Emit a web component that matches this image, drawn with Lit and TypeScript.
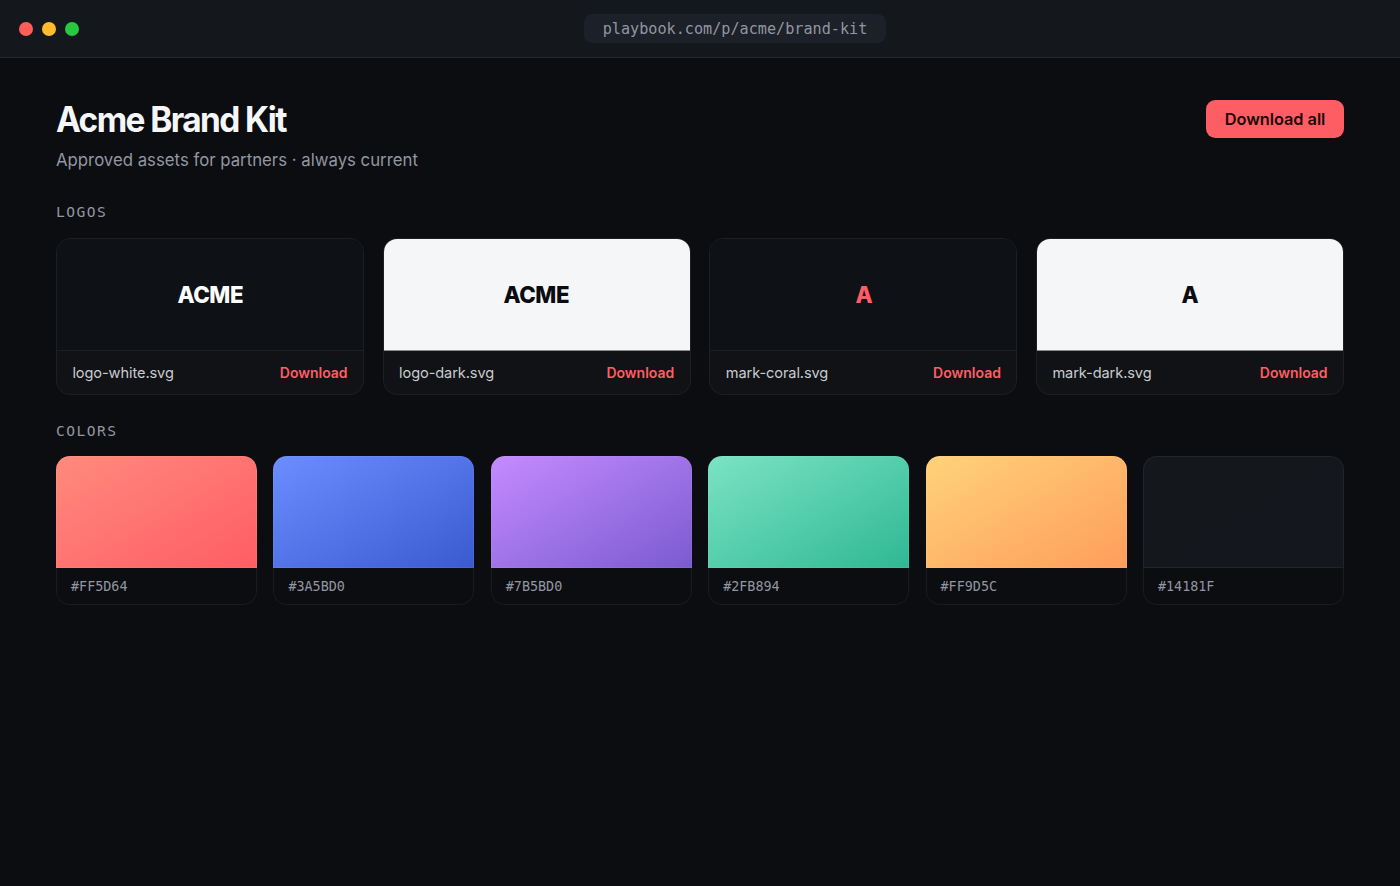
import { LitElement, html, css } from "lit";
import { customElement, property } from "lit/decorators.js";

const LOGOS = [
  { mark: "ACME", file: "logo-white.svg", tone: "white" },
  { mark: "ACME", file: "logo-dark.svg", tone: "dark" },
  { mark: "A", file: "mark-coral.svg", tone: "coral" },
  { mark: "A", file: "mark-dark.svg", tone: "dark" },
];

const COLORS = [
  { from: "#ff8a7d", hex: "#FF5D64" },
  { from: "#6b8dff", hex: "#3A5BD0" },
  { from: "#c48bff", hex: "#7B5BD0" },
  { from: "#7be3c3", hex: "#2FB894" },
  { from: "#ffd27a", hex: "#FF9D5C" },
  { from: "#14181c", to: "#14171d", hex: "#14181F" },
];

@customElement("logo-card")
class LogoCard extends LitElement {
  @property() mark = "";
  @property() file = "";
  @property() tone = "white";

  static styles = css`
    :host {
      display: block;
      box-sizing: border-box;
      border: 1px solid #1d2023;
      border-radius: 14px;
      overflow: hidden;
      background: #101215;
    }
    .preview {
      display: flex;
      align-items: center;
      justify-content: center;
      box-sizing: border-box;
      height: 112px;
      border-bottom: 1px solid #1d2023;
      background: #0e1115;
      color: #fff;
      font-size: 23.33px;
      font-weight: 800;
      letter-spacing: -0.02em;
    }
    .mark {
      transform: scaleX(0.955);
    }
    .dark {
      background: #f5f6f8;
      color: #0a0c10;
      border-bottom-color: #8a8b8d;
    }
    .coral {
      color: #ff5d64;
    }
    .footer {
      display: flex;
      align-items: baseline;
      justify-content: space-between;
      box-sizing: border-box;
      height: 43px;
      padding: 13px 15.4px 0;
      font-size: 14.58px;
      line-height: 18px;
    }
    .name {
      color: #c9ccd1;
      letter-spacing: -0.006em;
    }
    .get {
      color: #ff5d64;
      font-weight: 600;
      font-size: 14px;
    }
  `;

  render() {
    return html`
      <div class="preview ${this.tone}"><span class="mark">${this.mark}</span></div>
      <div class="footer">
        <span class="name">${this.file}</span>
        <span class="get">Download</span>
      </div>
    `;
  }
}

@customElement("color-swatch")
class ColorSwatch extends LitElement {
  @property() from = "";
  @property() to = "";
  @property() hex = "";

  static styles = css`
    :host {
      display: block;
    }
    .chip {
      box-sizing: border-box;
      height: 112px;
      border: 1px solid rgba(255, 255, 255, 0.06);
      border-radius: 14px 14px 0 0;
      background-origin: border-box;
    }
    .hex {
      box-sizing: border-box;
      height: 37px;
      padding: 11px 14px 0;
      border: 1px solid #191b1f;
      border-top: 0;
      border-radius: 0 0 14px 14px;
      font-family: "DejaVu Sans Mono", monospace;
      font-size: 13.42px;
      line-height: 16px;
      color: #9296a0;
    }
  `;

  render() {
    return html`
      <div class="chip" style="background-image: linear-gradient(150deg, ${this.from}, ${this.to})"></div>
      <div class="hex">${this.hex}</div>
    `;
  }
}

@customElement("app-root")
class AppRoot extends LitElement {
  static styles = css`
    :host {
      display: block;
      box-sizing: border-box;
      height: 886px;
      overflow: hidden;
      background: #0b0d11;
      color: #f5f6f8;
      font-family: Inter, sans-serif;
    }
    .chrome {
      display: flex;
      align-items: center;
      gap: 9.33px;
      box-sizing: border-box;
      height: 58px;
      padding: 0 18.67px;
      background: #14171c;
      border-bottom: 1px solid #24272c;
    }
    .dot {
      width: 14px;
      height: 14px;
      border-radius: 50%;
    }
    .red {
      background: #ff5f57;
    }
    .amber {
      background: #febc2e;
    }
    .green {
      background: #28c840;
    }
    .url {
      box-sizing: border-box;
      height: 29.4px;
      margin: 0 auto;
      padding: 1px 18.67px 0;
      border-radius: 8.2px;
      background: #1c2028;
      color: #9296a0;
      font-family: "DejaVu Sans Mono", monospace;
      font-size: 15.17px;
      line-height: 29.4px;
    }
    .page {
      padding: 42px 56px 0;
    }
    .head {
      display: flex;
      align-items: flex-start;
      justify-content: space-between;
      height: 103px;
    }
    .title {
      margin: 0;
      font-size: 35px;
      line-height: 38px;
      font-weight: 650;
      letter-spacing: -0.048em;
      transform: scaleX(0.955);
      transform-origin: 0 0;
    }
    .sub {
      margin: 10px 0 0;
      font-size: 17.5px;
      line-height: 24px;
      color: #9296a0;
      transform: scaleX(0.958);
      transform-origin: 0 0;
    }
    .all {
      border: 0;
      border-radius: 9.33px;
      padding: 0 18.67px;
      height: 38px;
      background: #ff5d64;
      color: #1a0708;
      font: 600 16.33px Inter, sans-serif;
      letter-spacing: -0.003em;
    }
    .label {
      margin: 0;
      height: 34px;
      font-family: "DejaVu Sans Mono", monospace;
      font-size: 14.58px;
      font-weight: 400;
      line-height: 17px;
      letter-spacing: 0.1em;
      color: #9296a0;
    }
    .logos {
      display: grid;
      grid-template-columns: repeat(4, 1fr);
      gap: 18.67px;
      margin: 1px 0 27px;
    }
    .colors {
      display: grid;
      grid-template-columns: repeat(6, 1fr);
      gap: 16.33px;
    }
  `;

  render() {
    return html`
      <div class="chrome">
        <span class="dot red"></span>
        <span class="dot amber"></span>
        <span class="dot green"></span>
        <span class="url">playbook.com/p/acme/brand-kit</span>
      </div>
      <main class="page">
        <header class="head">
          <div>
            <h1 class="title">Acme Brand Kit</h1>
            <p class="sub">Approved assets for partners · always current</p>
          </div>
          <button class="all">Download all</button>
        </header>
        <h2 class="label">LOGOS</h2>
        <div class="logos">
          ${LOGOS.map((l) => html`<logo-card .mark=${l.mark} .file=${l.file} .tone=${l.tone}></logo-card>`)}
        </div>
        <h2 class="label">COLORS</h2>
        <div class="colors">
          ${COLORS.map((c) => html`<color-swatch .from=${c.from} .to=${c.to ?? c.hex} .hex=${c.hex}></color-swatch>`)}
        </div>
      </main>
    `;
  }
}
